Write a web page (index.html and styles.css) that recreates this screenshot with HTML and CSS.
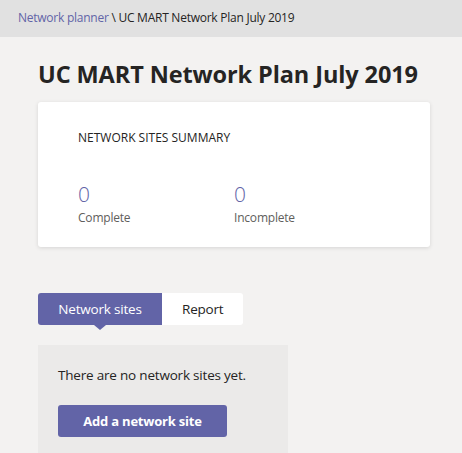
FILE: index.html
```html
<!DOCTYPE html>
<html>
<head>
<meta charset="utf-8">
<link rel="stylesheet" href="styles.css">
</head>
<body>
<div class="breadcrumb"><a class="crumb-link">Network planner</a> \ UC MART Network Plan July 2019</div>
<main class="content">
  <h1 class="title">UC MART Network Plan July 2019</h1>
  <section class="card">
    <h2 class="card-title">NETWORK SITES SUMMARY</h2>
    <div class="stats">
      <div class="stat"><div class="stat-num">0</div><div class="stat-label">Complete</div></div>
      <div class="stat"><div class="stat-num">0</div><div class="stat-label">Incomplete</div></div>
    </div>
  </section>
  <div class="tabs">
    <div class="tab active">Network sites</div>
    <div class="tab">Report</div>
  </div>
  <section class="panel">
    <p class="empty">There are no network sites yet.</p>
    <button class="btn">Add a network site</button>
  </section>
</main>
</body>
</html>
```
FILE: styles.css
```css
html, body { margin: 0; padding: 0; }
body {
  background: #f3f2f1;
  font-family: "Open Sans", "Noto Sans", sans-serif;
  color: #252423;
  width: 462px;
  height: 453px;
  overflow: hidden;
}
.breadcrumb {
  height: 37px;
  background: #e1e1e1;
  box-sizing: border-box;
  padding: 10px 18px 0;
  font-size: 12px;
  line-height: 16px;
  color: #252423;
  letter-spacing: -0.25px;
}
.crumb-link { color: #6264a7; }
.content { padding: 0 0 0 38px; }
.title {
  margin: 0;
  padding-top: 22px;
  font-size: 23.5px;
  line-height: 30px;
  font-weight: 700;
  letter-spacing: -0.1px;
  height: 43px;
}
.card {
  width: 392px;
  height: 145px;
  box-sizing: border-box;
  background: #fff;
  border-radius: 3px;
  box-shadow: 0 1px 4px rgba(0,0,0,0.12);
  padding: 28px 40px 0;
}
.card-title {
  margin: 0;
  font-size: 12px;
  line-height: 16px;
  font-weight: 400;
}
.stats { display: flex; margin-top: 35px; }
.stat { width: 156px; }
.stat-num {
  font-size: 21px;
  line-height: 26px;
  font-weight: 300;
  color: #6264a7;
}
.stat-label {
  font-size: 12px;
  line-height: 16px;
  color: #605e5c;
  margin-top: 3px;
  letter-spacing: -0.2px;
}
.tabs { display: flex; margin-top: 46px; }
.tab {
  height: 32px;
  line-height: 32px;
  font-size: 13.5px;
  background: #fff;
  padding: 0 20px;
  text-align: center;
  position: relative;
  letter-spacing: -0.2px;
}
.tab:last-child { border-radius: 0 3px 3px 0; width: 81px; box-sizing: border-box; }
.tab.active {
  background: #6264a7;
  color: #fff;
  border-radius: 3px 0 0 3px;
  width: 124px;
  box-sizing: border-box;
}
.tab.active::after {
  content: "";
  position: absolute;
  left: 50%;
  bottom: -5px;
  margin-left: -6px;
  border-left: 6px solid transparent;
  border-right: 6px solid transparent;
  border-top: 5px solid #6264a7;
}
.panel {
  margin-top: 20px;
  width: 250px;
  height: 120px;
  background: #ebeae9;
  box-sizing: border-box;
  padding: 20px 20px 0;
}
.empty {
  margin: 0;
  font-size: 13.5px;
  line-height: 20px;
  letter-spacing: -0.2px;
}
.btn {
  margin-top: 20px;
  height: 32px;
  width: 169px;
  border: none;
  border-radius: 3px;
  background: #6264a7;
  color: #fff;
  font-family: inherit;
  font-size: 13px;
  font-weight: 700;
  letter-spacing: -0.2px;
  padding: 0;
}
```
